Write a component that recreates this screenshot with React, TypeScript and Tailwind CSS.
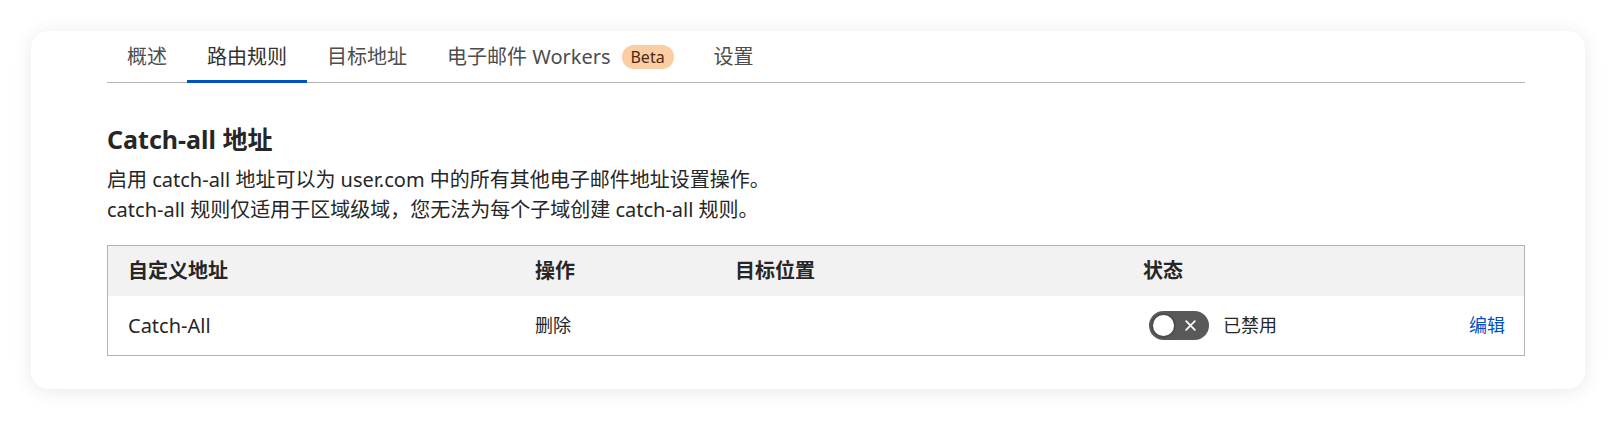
const font = { fontFamily: '"Noto Sans", "Noto Sans CJK SC", sans-serif' };

const tabs = [
  { label: '概述' },
  { label: '路由规则', active: true },
  { label: '目标地址' },
  { label: '电子邮件 Workers', badge: 'Beta' },
  { label: '设置' },
];

function Toggle() {
  return (
    <div className="ml-[6px] flex h-[29px] w-[60px] items-center justify-between rounded-full bg-[#595959] p-[2px]">
      <div className="h-[25px] w-[25px] rounded-full border-2 border-[#4d4d4d] bg-white" />
      <svg className="mr-[10px]" width="13" height="13" viewBox="0 0 12 12" fill="none" stroke="white" strokeWidth="1.6" strokeLinecap="round">
        <path d="M2 2l8 8M10 2l-8 8" />
      </svg>
    </div>
  );
}

export default function App() {
  return (
    <div className="min-h-screen bg-white p-[31px]" style={font}>
      <div className="rounded-[18px] bg-white pl-[76px] pr-[60px] pb-[33px] shadow-[0_2px_20px_rgba(0,0,0,0.09)]">
        <nav className="flex h-[52px] border-b border-[#b3b3b3]">
          {tabs.map((t) => (
            <div
              key={t.label}
              className={
                t.active
                  ? 'mb-[-1px] flex items-center border-b-[3px] border-[#0051c3] px-5 pt-[2px] text-[20px] text-[#313131]'
                  : 'flex items-center px-5 text-[20px] text-[#4d4d4d]'
              }
            >
              {t.label}
              {t.badge && (
                <span className="ml-[11px] flex h-[24px] w-[52px] items-center justify-center rounded-full bg-[#fbcda3] text-[16px] text-[#4b2a12]">
                  {t.badge}
                </span>
              )}
            </div>
          ))}
        </nav>

        <h2 className="mt-[39px] text-[25px] font-bold leading-[34px] text-[#262626]">Catch-all 地址</h2>
        <div className="mt-[9px] text-[20px] leading-[30px] text-[#262626]">
          <p>启用 catch-all 地址可以为 user.com 中的所有其他电子邮件地址设置操作。</p>
          <p>catch-all 规则仅适用于区域级域，您无法为每个子域创建 catch-all 规则。</p>
        </div>

        <div className="mt-5 border border-[#b3b3b3] text-[20px] text-[#262626]">
          <div className="grid h-[50px] grid-cols-[407px_200px_408px_1fr] items-center bg-[#f2f2f2] font-bold">
            <div className="pl-[20px]">自定义地址</div>
            <div className="pl-[20px]">操作</div>
            <div className="pl-[20px]">目标位置</div>
            <div className="pl-[20px]">状态</div>
          </div>
          <div className="grid h-[59px] grid-cols-[407px_200px_408px_1fr] items-center">
            <div className="pl-[20px]">Catch-All</div>
            <div className="pl-[20px] text-[18px]">删除</div>
            <div className="pl-[20px]" />
            <div className="flex items-center justify-between pl-[20px] pr-[19px]">
              <div className="flex items-center gap-[14px]">
                <Toggle />
                <span className="text-[18px]">已禁用</span>
              </div>
              <a className="text-[18px] text-[#0051c3]">编辑</a>
            </div>
          </div>
        </div>
      </div>
    </div>
  );
}
